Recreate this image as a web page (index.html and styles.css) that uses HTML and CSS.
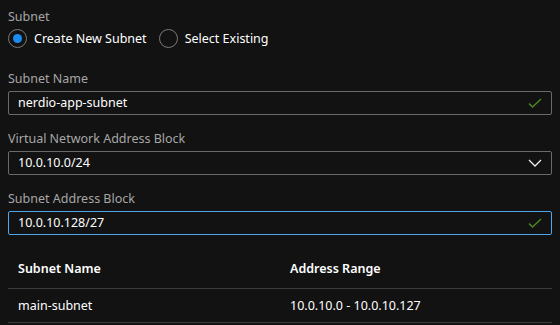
FILE: index.html
```html
<!DOCTYPE html>
<html lang="en">
<head>
    <meta charset="UTF-8">
    <title>Subnet</title>
    <link rel="stylesheet" href="styles.css">
</head>
<body>
    <div class="subnet-form">
        <!-- Subnet mode -->
        <div class="field field-radio">
            <div class="field-label">Subnet</div>
            <div class="radio-group">
                <label class="radio">
                    <span class="radio-circle checked"></span>
                    Create New Subnet
                </label>
                <label class="radio">
                    <span class="radio-circle"></span>
                    Select Existing
                </label>
            </div>
        </div>

        <div class="field">
            <div class="field-label">Subnet Name</div>
            <div class="input">
                <span class="input-value">nerdio-app-subnet</span>
                <svg class="icon-check" width="14" height="10" viewBox="0 0 14 10"><path d="M1 5.5 L4.5 9 L13 1" fill="none" stroke="#4f8a1e" stroke-width="1.4"/></svg>
            </div>
        </div>

        <div class="field">
            <div class="field-label">Virtual Network Address Block</div>
            <div class="input">
                <span class="input-value">10.0.10.0/24</span>
                <svg class="icon-chevron" width="14" height="8" viewBox="0 0 14 8"><path d="M1 1 L7 7 L13 1" fill="none" stroke="#f0f0f0" stroke-width="1.3"/></svg>
            </div>
        </div>

        <div class="field">
            <div class="field-label">Subnet Address Block</div>
            <div class="input input-focus">
                <span class="input-value">10.0.10.128/27</span>
                <svg class="icon-check" width="14" height="10" viewBox="0 0 14 10"><path d="M1 5.5 L4.5 9 L13 1" fill="none" stroke="#4f8a1e" stroke-width="1.4"/></svg>
            </div>
        </div>

        <!-- Existing subnets -->
        <table class="subnet-table">
            <thead>
                <tr>
                    <th>Subnet Name</th>
                    <th>Address Range</th>
                </tr>
            </thead>
            <tbody>
                <tr>
                    <td>main-subnet</td>
                    <td>10.0.10.0 - 10.0.10.127</td>
                </tr>
            </tbody>
        </table>
    </div>
</body>
</html>
```

FILE: styles.css
```css
*, *::before, *::after {
    box-sizing: border-box;
    margin: 0;
    padding: 0;
}

body {
    background-color: #121212;
    color: #ffffff;
    font-family: 'Noto Sans', 'Open Sans', sans-serif;
    font-size: 12.5px;
}

.subnet-form {
    padding: 8px 8px 0 8px;
}

/* Fields */
.field {
    margin-bottom: 15px;
}

.field-radio {
    margin-bottom: 21px;
}

.field-label {
    color: #a6a6a6;
    line-height: 18px;
    margin-bottom: 3px;
}

.field-radio .field-label {
    margin-bottom: 1px;
}

.radio-group {
    display: flex;
    gap: 12px;
    align-items: center;
    height: 22px;
}

.radio {
    display: flex;
    align-items: center;
    gap: 7px;
}

.radio-circle {
    width: 19px;
    height: 19px;
    border: 1.5px solid #7a7a7a;
    border-radius: 50%;
    display: flex;
    align-items: center;
    justify-content: center;
}

.radio-circle.checked::after {
    content: '';
    width: 9px;
    height: 9px;
    border-radius: 50%;
    background-color: #1a8cf0;
}

.input {
    height: 24px;
    border: 1px solid #6a6a6a;
    border-radius: 2px;
    display: flex;
    align-items: center;
    justify-content: space-between;
    padding: 0 9px 0 9px;
}

.input-focus {
    border-color: #4ea6ea;
}

.input-value {
    line-height: 22px;
}

/* Table */
.subnet-table {
    width: 100%;
    border-collapse: collapse;
    margin-top: 15px;
}

.subnet-table th,
.subnet-table td {
    width: 50%;
    text-align: left;
    padding: 0 10px;
    border-bottom: 1px solid #3c3c3c;
}

.subnet-table th {
    font-weight: 600;
    height: 38px;
}

.subnet-table td {
    height: 34px;
}
```
